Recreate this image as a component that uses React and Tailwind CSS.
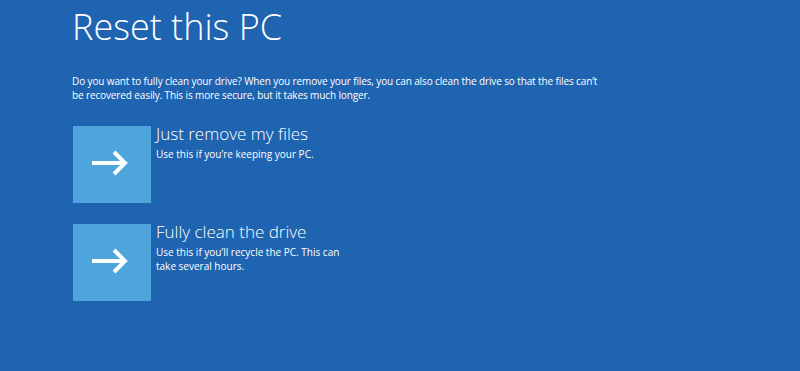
import React from "react";

function Arrow() {
  return (
    <svg width="36" height="26" viewBox="0 0 36 26" fill="none">
      <path d="M0 13 H33" stroke="white" strokeWidth="4" />
      <path d="M22 2 L33 13 L22 24" stroke="white" strokeWidth="4" strokeLinejoin="miter" />
    </svg>
  );
}

function Option({ title, lines, className }) {
  return (
    <div className={"flex " + (className || "")}>
      <div className="w-[78px] h-[77px] bg-[#4ea5dc] pl-[19px] pt-[24px] shrink-0">
        <Arrow />
      </div>
      <div className="ml-[5px]">
        <div className="text-[17px] leading-[20px] -mt-[2px] font-light">{title}</div>
        <div className="mt-[3px] text-[10px] leading-[14px]">
          {lines.map((l, i) => (
            <div key={i}>{l}</div>
          ))}
        </div>
      </div>
    </div>
  );
}

export default function App() {
  return (
    <div className="w-[800px] h-[371px] bg-[#1f64b1] text-white font-['Open_Sans',sans-serif] pl-[72px] pt-[5px] overflow-hidden">
      <h1 className="text-[36px] leading-[44px] font-light">Reset this PC</h1>
      <div className="mt-[25px] text-[10px] leading-[14px] tracking-[-0.12px]">
        <div>Do you want to fully clean your drive? When you remove your files, you can also clean the drive so that the files can’t</div>
        <div>be recovered easily. This is more secure, but it takes much longer.</div>
      </div>
      <Option
        className="mt-[24px] ml-[1px]"
        title="Just remove my files"
        lines={["Use this if you’re keeping your PC."]}
      />
      <Option
        className="mt-[21px] ml-[1px]"
        title="Fully clean the drive"
        lines={["Use this if you’ll recycle the PC. This can", "take several hours."]}
      />
    </div>
  );
}
